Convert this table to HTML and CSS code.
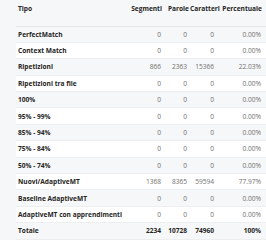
FILE: index.html
```html
<!DOCTYPE html>
<html>
<head>
<meta charset="utf-8">
<link rel="stylesheet" href="styles.css">
</head>
<body>
<div class="wrap">
<table class="grid">
<colgroup>
<col class="c-tipo"><col class="c-seg"><col class="c-par"><col class="c-car"><col class="c-pct">
</colgroup>
<thead>
<tr><th class="lbl">Tipo</th><th class="seg">Segmenti</th><th class="par">Parole</th><th class="car">Caratteri</th><th class="pct">Percentuale</th></tr>
</thead>
<tbody>
<tr><td class="lbl">PerfectMatch</td><td class="seg">0</td><td class="par">0</td><td class="car">0</td><td class="pct">0.00%</td></tr>
<tr><td class="lbl">Context Match</td><td class="seg">0</td><td class="par">0</td><td class="car">0</td><td class="pct">0.00%</td></tr>
<tr><td class="lbl">Ripetizioni</td><td class="seg">866</td><td class="par">2363</td><td class="car">15366</td><td class="pct">22.03%</td></tr>
<tr><td class="lbl">Ripetizioni tra file</td><td class="seg">0</td><td class="par">0</td><td class="car">0</td><td class="pct">0.00%</td></tr>
<tr><td class="lbl">100%</td><td class="seg">0</td><td class="par">0</td><td class="car">0</td><td class="pct">0.00%</td></tr>
<tr><td class="lbl">95% - 99%</td><td class="seg">0</td><td class="par">0</td><td class="car">0</td><td class="pct">0.00%</td></tr>
<tr><td class="lbl">85% - 94%</td><td class="seg">0</td><td class="par">0</td><td class="car">0</td><td class="pct">0.00%</td></tr>
<tr><td class="lbl">75% - 84%</td><td class="seg">0</td><td class="par">0</td><td class="car">0</td><td class="pct">0.00%</td></tr>
<tr><td class="lbl">50% - 74%</td><td class="seg">0</td><td class="par">0</td><td class="car">0</td><td class="pct">0.00%</td></tr>
<tr><td class="lbl">Nuovi/AdaptiveMT</td><td class="seg">1368</td><td class="par">8365</td><td class="car">59594</td><td class="pct">77.97%</td></tr>
<tr><td class="lbl">Baseline AdaptiveMT</td><td class="seg">0</td><td class="par">0</td><td class="car">0</td><td class="pct">0.00%</td></tr>
<tr><td class="lbl">AdaptiveMT con apprendimenti</td><td class="seg">0</td><td class="par">0</td><td class="car">0</td><td class="pct">0.00%</td></tr>
</tbody>
<tfoot>
<tr><td class="lbl">Totale</td><td class="seg">2234</td><td class="par">10728</td><td class="car">74960</td><td class="pct">100%</td></tr>
</tfoot>
</table>
</div>
</body>
</html>
```

FILE: styles.css
```css
html, body {
  margin: 0;
  padding: 0;
  background: #f6f7f8;
  overflow: hidden;
}
.wrap {
  padding-left: 16px;
}
.grid {
  border-collapse: collapse;
  table-layout: fixed;
  width: 250px;
  font-family: "Open Sans", "Noto Sans", sans-serif;
  font-size: 6.6px;
  color: #707070;
}
.c-tipo { width: 107px; }
.c-seg { width: 42px; }
.c-par { width: 25px; }
.c-car { width: 29px; }
.c-pct { width: 47px; }
th {
  height: 26px;
  vertical-align: top;
  padding: 4px 0 0 0;
  text-align: right;
  font-weight: 700;
  font-size: 6.6px;
  color: #252423;
  background: #f6f7f8;
  border-bottom: 1px solid #e4e6e8;
  box-sizing: border-box;
  white-space: nowrap;
}
th.seg { padding-right: 3px; }
th.par { padding-right: 1px; }
th.car { padding-right: 1px; }
th.pct { padding-right: 4px; }
td {
  height: 16.4px;
  padding: 0;
  text-align: right;
  box-sizing: border-box;
  border-bottom: 1px solid #eceef0;
  white-space: nowrap;
}
td.seg { padding-right: 4px; }
td.par { padding-right: 3px; }
td.car { padding-right: 5px; }
td.pct { padding-right: 5px; }
.lbl {
  text-align: left;
  padding-left: 2px;
  font-weight: 700;
  color: #252423;
}
tbody tr:nth-child(odd) { background: #f6f7f8; }
tbody tr:nth-child(even) { background: #ffffff; }
tfoot td {
  font-weight: 700;
  color: #252423;
  background: #f6f7f8;
  border-top: 1px solid #e4e6e8;
}
```
